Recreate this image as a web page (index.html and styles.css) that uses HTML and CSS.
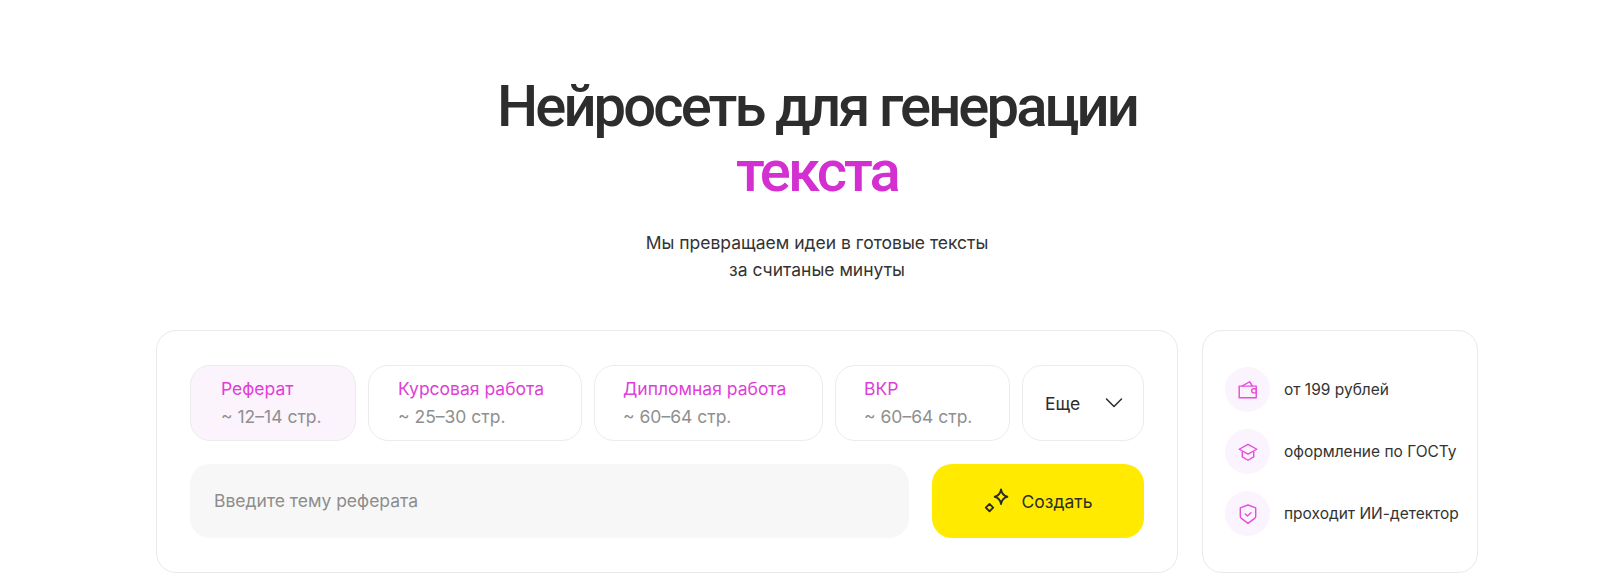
FILE: index.html
```html
<!DOCTYPE html>
<html lang="ru">
<head>
    <meta charset="UTF-8">
    <meta name="viewport" content="width=device-width, initial-scale=1.0">
    <title>Нейросеть для генерации текста</title>
    <link rel="stylesheet" href="styles.css">
</head>
<body>
    <header class="hero">
        <h1>Нейросеть для генерации <span class="accent">текста</span></h1>
        <p>Мы превращаем идеи в готовые тексты<br>за считаные минуты</p>
    </header>

    <main class="panels">
        <section class="card generator">
            <div class="tabs">
                <button class="tab active"><span class="tab-name">Реферат</span><span class="tab-size">~ 12–14 стр.</span></button>
                <button class="tab"><span class="tab-name">Курсовая работа</span><span class="tab-size">~ 25–30 стр.</span></button>
                <button class="tab"><span class="tab-name">Дипломная работа</span><span class="tab-size">~ 60–64 стр.</span></button>
                <button class="tab"><span class="tab-name">ВКР</span><span class="tab-size">~ 60–64 стр.</span></button>
                <button class="tab more">Еще
                    <svg width="20" height="20" viewBox="0 0 20 20" fill="none" stroke="#2b2b2b" stroke-width="1.5" stroke-linecap="round" stroke-linejoin="round"><path d="M2.5 6l7.5 7.5L17.5 6"/></svg>
                </button>
            </div>
            <form class="topic-form">
                <input type="text" class="topic" placeholder="Введите тему реферата">
                <button type="button" class="create">
                    <svg width="30" height="30" viewBox="0 0 26 26" fill="none" stroke="#2b2b2b" stroke-width="1.6" stroke-linejoin="round"><path d="M16.500 3c.7 3.800 2.200 5.500 5.500 6.300-3.300.8-4.800 2.500-5.500 6.300-.7-3.800-2.200-5.500-5.500-6.300 3.300-.8 4.800-2.500 5.500-6.300z"/><path d="M6.500 15.500l3.200 3.200-3.200 3.200-3.200-3.200z"/></svg>
                    Создать
                </button>
            </form>
        </section>

        <aside class="card perks">
            <div class="perk">
                <span class="perk-icon">
                    <svg width="22" height="22" viewBox="0 0 20 20" fill="none" stroke="#e44fdc" stroke-width="1.3" stroke-linejoin="round"><path d="M2 6.500h15.500V17H2z"/><path d="M4.500 6.500L11.500 2.500l2.500 4"/><path d="M17.500 8.800h-2.300a1.900 1.900 0 0 0 0 3.800h2.300z"/></svg>
                </span>
                от 199 рублей
            </div>
            <div class="perk">
                <span class="perk-icon">
                    <svg width="22" height="22" viewBox="0 0 20 20" fill="none" stroke="#e44fdc" stroke-width="1.3" stroke-linejoin="round"><path d="M10 3l8 4.500-8 4.500-8-4.500z"/><path d="M4.800 9.500v5L10 17.500l5.200-3v-5"/></svg>
                </span>
                оформление по ГОСТу
            </div>
            <div class="perk">
                <span class="perk-icon">
                    <svg width="22" height="22" viewBox="0 0 20 20" fill="none" stroke="#e44fdc" stroke-width="1.3" stroke-linejoin="round" stroke-linecap="round"><path d="M10 1.800l7 2.700v7.500c0 .8-.3 1.400-1 2L10 18.500 4 14c-.7-.6-1-1.200-1-2V4.500z"/><path d="M7.500 10l2 1.800 3.200-3"/></svg>
                </span>
                проходит ИИ-детектор
            </div>
        </aside>
    </main>
</body>
</html>
```

FILE: styles.css
```css
* {
    box-sizing: border-box;
}
body {
    margin: 0;
    background-color: #fff;
    font-family: Inter, "Noto Sans", sans-serif;
    color: #2d2d2d;
    overflow: hidden;
}
.hero {
    width: 700px;
    margin-left: 467px;
    padding-top: 74px;
    text-align: center;
}
h1 {
    margin: 0;
    font-family: Roboto, Inter, sans-serif;
    font-size: 58px;
    line-height: 65px;
    font-weight: 500;
    letter-spacing: -2.9px;
    color: #2d2d2d;
}
.accent {
    display: block;
    color: #d42fd0;
}
.hero p {
    margin: 25px 0 0;
    font-size: 17.500px;
    line-height: 27px;
    color: #333;
}
.panels {
    display: flex;
    gap: 24px;
    margin: 47px 0 0 156px;
    width: 1322px;
    height: 243px;
}
.card {
    background: #fff;
    border: 1px solid #e9e9e9;
    border-radius: 20px;
}
.generator {
    flex: 1;
    padding: 34px 33px 33px;
}
.tabs {
    display: flex;
    gap: 12px;
    height: 76px;
}
.tab {
    display: flex;
    flex-direction: column;
    justify-content: center;
    gap: 6px;
    padding: 0 28px;
    background: #fff;
    border: 1px solid #ececec;
    border-radius: 20px;
    font-family: inherit;
    text-align: left;
}
.tab:nth-child(1) {
    width: 166px;
    padding-left: 30px;
}
.tab:nth-child(2) {
    width: 214px;
    padding-left: 29px;
}
.tab:nth-child(3) {
    width: 229px;
}
.tab:nth-child(4) {
    width: 175px;
}
.tab.active {
    background-color: #fbf4fc;
}
.tab-name {
    font-size: 17.500px;
    line-height: 22px;
    color: #e03ed8;
}
.tab-size {
    font-size: 17.500px;
    line-height: 22px;
    color: #8f8f8f;
}
.more {
    flex: 1;
    flex-direction: row;
    align-items: center;
    justify-content: space-between;
    padding: 0 19px 0 22px;
    font-size: 17.500px;
    color: #2d2d2d;
}
.topic-form {
    display: flex;
    gap: 23px;
    margin-top: 23px;
    height: 74px;
}
.topic {
    flex: 1;
    min-width: 0;
    padding: 0 24px 2px;
    background: #f7f7f7;
    border: none;
    border-radius: 20px;
    font-family: inherit;
    font-size: 17.500px;
    color: #2d2d2d;
}
.topic::placeholder {
    color: #8d8d8d;
}
.create {
    display: flex;
    align-items: center;
    justify-content: center;
    gap: 10px;
    width: 212px;
    padding: 0 2px 0 0;
    background-color: #ffea00;
    border: none;
    border-radius: 20px;
    font-family: inherit;
    font-size: 17.500px;
    color: #2d2d2d;
}
.perks {
    width: 276px;
    display: flex;
    flex-direction: column;
    gap: 17px;
    padding: 36px 0 0 22px;
}
.perk {
    display: flex;
    align-items: center;
    gap: 14px;
    font-size: 15.500px;
    white-space: nowrap;
    color: #333;
}
.perk-icon {
    display: flex;
    align-items: center;
    justify-content: center;
    width: 45px;
    height: 45px;
    flex-shrink: 0;
    border-radius: 50%;
    background-color: #fbf3fd;
}
```
